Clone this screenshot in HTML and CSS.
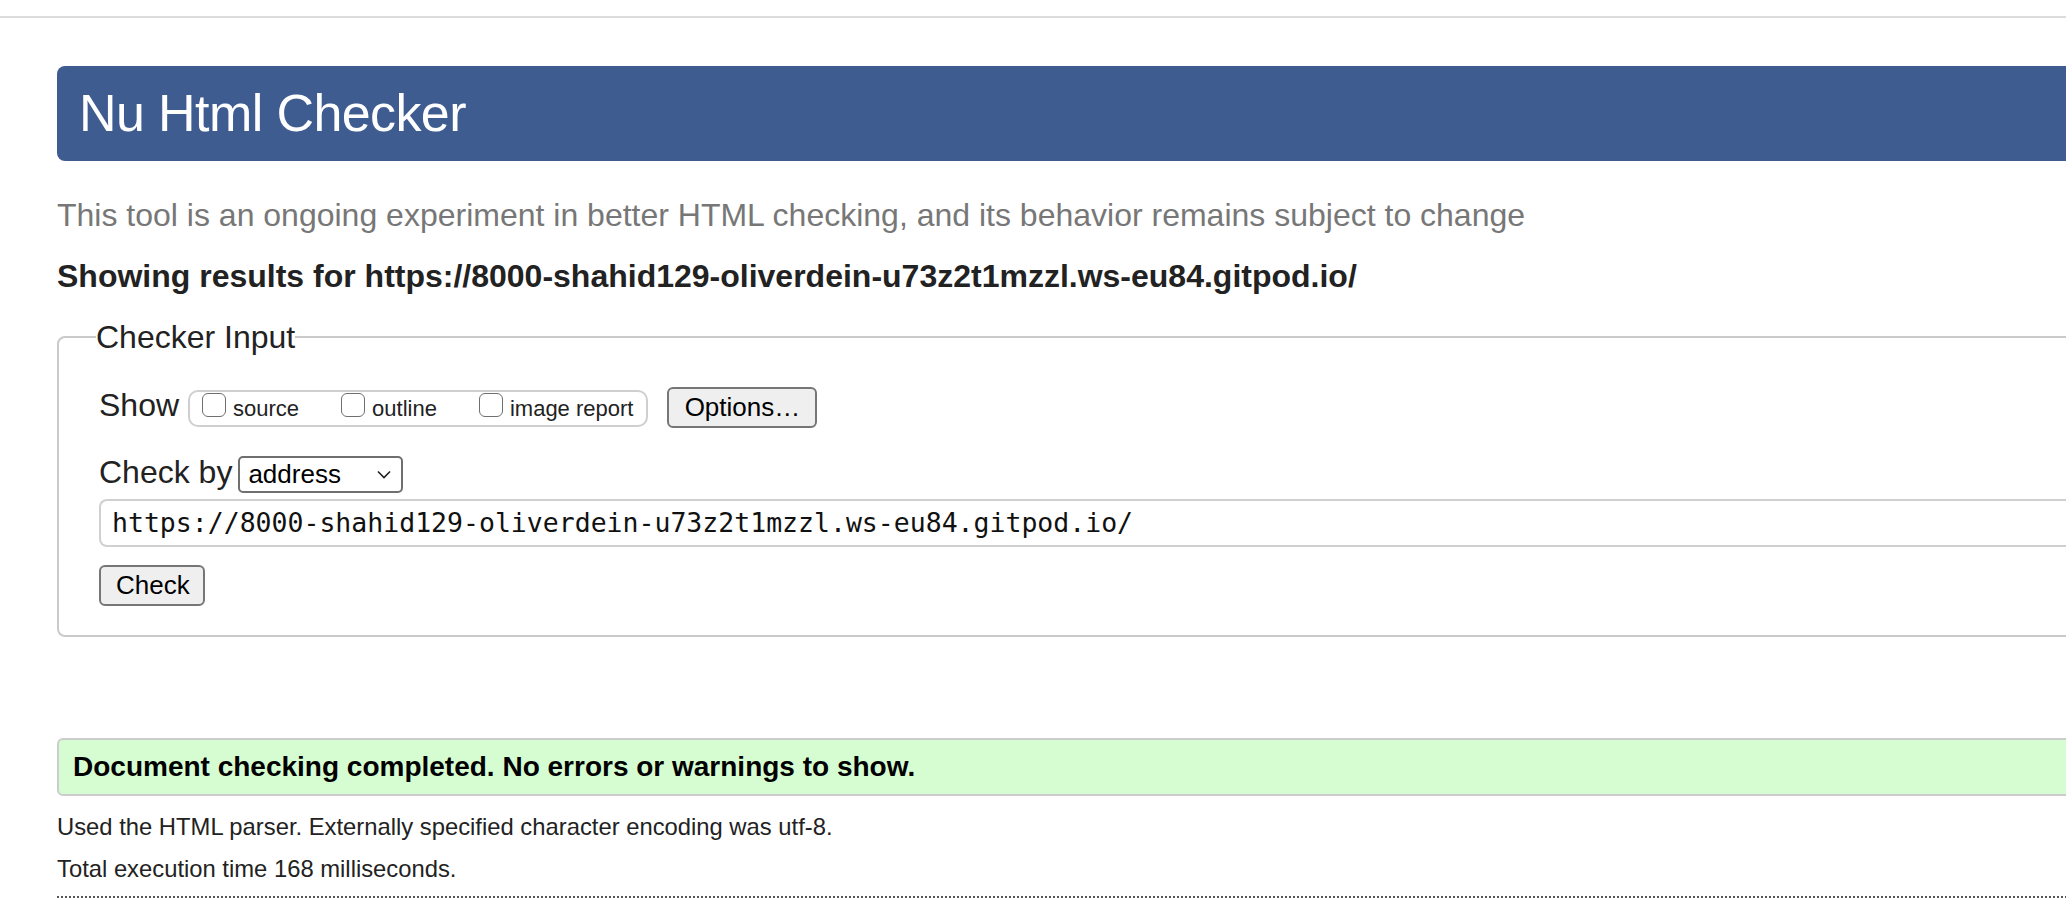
FILE: index.html
```html
<!DOCTYPE html>
<html lang="en">
<head>
<meta charset="utf-8">
<title>Nu Html Checker</title>
<link rel="stylesheet" href="styles.css">
</head>
<body>
<div class="topline"></div>
<div class="page">
  <h1 class="title">Nu Html Checker</h1>
  <p class="subtitle">This tool is an ongoing experiment in better HTML checking, and its behavior remains subject to change</p>
  <p class="showing">Showing results for https://8000-shahid129-oliverdein-u73z2t1mzzl.ws-eu84.gitpod.io/</p>
  <fieldset class="checker">
    <legend class="legend">Checker Input</legend>
    <div class="row show-row">
      <span class="label">Show</span>
      <span class="group">
        <label class="opt"><input type="checkbox" class="cb"><span class="opt-text">source</span></label>
        <label class="opt"><input type="checkbox" class="cb"><span class="opt-text">outline</span></label>
        <label class="opt"><input type="checkbox" class="cb"><span class="opt-text">image report</span></label>
      </span>
      <button class="btn options">Options…</button>
    </div>
    <div class="row by-row">
      <span class="label">Check by</span>
      <span class="select">address<svg class="chev" width="14" height="9" viewBox="0 0 14 9"><path d="M1 1.5 L7 7.5 L13 1.5" fill="none" stroke="#222" stroke-width="1.6"/></svg></span>
    </div>
    <div class="url">https://8000-shahid129-oliverdein-u73z2t1mzzl.ws-eu84.gitpod.io/</div>
    <button class="btn check">Check</button>
  </fieldset>
  <div class="success">Document checking completed. No errors or warnings to show.</div>
  <p class="info first">Used the HTML parser. Externally specified character encoding was utf-8.</p>
  <p class="info">Total execution time 168 milliseconds.</p>
</div>
<div class="dotted"></div>
</body>
</html>
```
FILE: styles.css
```css
html, body {
  margin: 0;
  padding: 0;
  overflow: hidden;
  background: #fff;
}
body {
  font-family: "Liberation Sans", Arial, Helvetica, sans-serif;
  color: #222;
}
.topline {
  margin-top: 16px;
  border-top: 2px solid #dcdcdc;
}
.page {
  margin-left: 57px;
  width: 2400px;
}
.title {
  margin: 48px 0 0 0;
  height: 95px;
  line-height: 95px;
  padding-left: 22px;
  background: #3e5c90;
  color: #fff;
  font-size: 52px;
  font-weight: normal;
  letter-spacing: -0.6px;
  border-radius: 8px;
}
.subtitle {
  margin: 36px 0 0 0;
  font-size: 32px;
  line-height: 36px;
  color: #777;
}
.showing {
  margin: 25px 0 0 0;
  font-size: 32px;
  line-height: 36px;
  font-weight: bold;
  color: #222;
}
.checker {
  margin: 25px 0 0 0;
  padding: 0 0 29px 40px;
  border: 2px solid #cacaca;
  border-radius: 8px;
  min-width: 0;
}
.legend {
  margin-left: -3px;
  padding: 0;
  font-size: 32px;
  line-height: 36px;
}
.row {
  display: flex;
  align-items: baseline;
}
.show-row {
  margin-top: 32px;
}
.label {
  font-size: 32px;
  line-height: 36px;
}
.group {
  display: inline-flex;
  align-items: baseline;
  margin-left: 9px;
  height: 33px;
  padding: 0 13px 0 12px;
  border: 2px solid #cfcfcf;
  border-radius: 10px;
  line-height: 33px;
}
.opt {
  display: inline-flex;
  align-items: baseline;
  margin-right: 42px;
}
.opt:last-child {
  margin-right: 0;
}
.cb {
  appearance: none;
  -webkit-appearance: none;
  margin: 0 7px 0 0;
  width: 24px;
  height: 24px;
  border: 1.5px solid #6f6f6f;
  border-radius: 6px;
  background: #fff;
  box-sizing: border-box;
  align-self: center;
  position: relative;
  top: -4px;
}
.opt-text {
  font-size: 22px;
}
.btn {
  font-family: "Liberation Sans", Arial, Helvetica, sans-serif;
  font-size: 26px;
  color: #000;
  background: #efefef;
  border: 2px solid #767676;
  border-radius: 6px;
  box-sizing: border-box;
  padding: 0 15px;
  line-height: 37px;
  height: 41px;
}
.options {
  margin-left: 19px;
  width: 150px;
}
.by-row {
  margin-top: 26px;
}
.select {
  display: inline-flex;
  align-items: center;
  justify-content: space-between;
  margin-left: 6px;
  width: 165px;
  height: 37px;
  box-sizing: border-box;
  padding: 0 10px 0 8px;
  border: 2px solid #6f6f6f;
  border-radius: 5px;
  font-size: 26px;
  line-height: 33px;
  color: #000;
}
.chev {
  display: block;
}
.url {
  margin-top: 6px;
  height: 48px;
  box-sizing: border-box;
  padding-left: 11px;
  border: 2px solid #d0d0d0;
  border-right: none;
  border-radius: 8px 0 0 8px;
  font-family: "DejaVu Sans Mono", "Liberation Mono", monospace;
  font-size: 26.5px;
  line-height: 44px;
  color: #111;
}
.check {
  display: block;
  margin-top: 18px;
  width: 106px;
  padding: 0 15px;
}
.success {
  margin-top: 101px;
  height: 58px;
  box-sizing: border-box;
  padding-left: 14px;
  border: 2px solid #cccccc;
  border-radius: 6px;
  background: #d6fdd2;
  font-size: 28px;
  font-weight: bold;
  line-height: 54px;
  color: #000;
}
.info {
  margin: 0;
  font-size: 23.8px;
  line-height: 42px;
  color: #222;
}
.info.first {
  margin-top: 10px;
}
.dotted {
  margin-top: 6px;
  border-top: 2px dotted #555;
  width: 100%;
  margin-left: 57px;
}
```
